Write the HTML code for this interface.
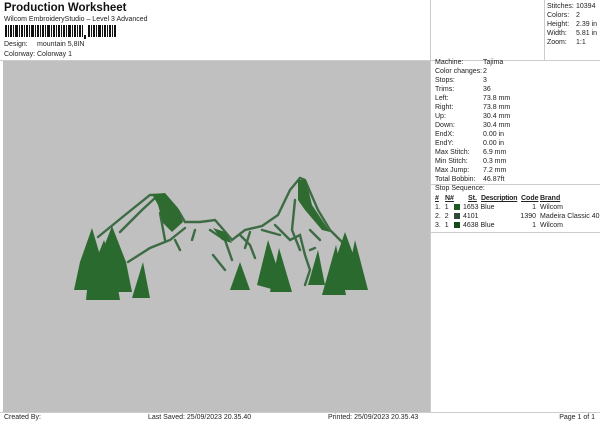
<!DOCTYPE html>
<html><head><style>
body{margin:0;width:600px;height:424px;background:#fff;font-family:"Liberation Sans",sans-serif;font-size:7px;color:#222;position:relative;overflow:hidden}
.a{position:absolute;white-space:nowrap}
.r{position:absolute;white-space:nowrap;line-height:9px}
</style></head><body>
<div class="a" style="left:4px;top:2px;font-size:11.5px;font-weight:bold;color:#111">Production Worksheet</div>
<div class="a" style="left:4px;top:16px">Wilcom EmbroideryStudio – Level 3 Advanced</div>
<svg class="a" style="left:5px;top:25px" width="115" height="14">
<g fill="#111">
<rect x="0" y="0" width="2" height="12"/><rect x="3" y="0" width="1" height="12"/><rect x="5" y="0" width="2" height="12"/><rect x="8" y="0" width="1" height="12"/><rect x="10" y="0" width="3" height="12"/><rect x="14" y="0" width="1" height="12"/><rect x="16" y="0" width="2" height="12"/><rect x="19" y="0" width="1" height="12"/><rect x="21" y="0" width="2" height="12"/><rect x="24" y="0" width="1" height="12"/><rect x="26" y="0" width="3" height="12"/><rect x="30" y="0" width="1" height="12"/><rect x="32" y="0" width="2" height="12"/><rect x="35" y="0" width="1" height="12"/><rect x="37" y="0" width="2" height="12"/><rect x="40" y="0" width="1" height="12"/><rect x="42" y="0" width="3" height="12"/><rect x="46" y="0" width="1" height="12"/><rect x="48" y="0" width="2" height="12"/><rect x="51" y="0" width="1" height="12"/><rect x="53" y="0" width="2" height="12"/><rect x="56" y="0" width="1" height="12"/><rect x="58" y="0" width="2" height="12"/><rect x="61" y="0" width="1" height="12"/><rect x="63" y="0" width="3" height="12"/><rect x="67" y="0" width="1" height="12"/><rect x="69" y="0" width="2" height="12"/><rect x="72" y="0" width="1" height="12"/><rect x="74" y="0" width="2" height="12"/><rect x="77" y="0" width="1" height="12"/>
<rect x="79" y="10" width="2" height="4"/>
<rect x="83" y="0" width="2" height="12"/><rect x="86" y="0" width="1" height="12"/><rect x="88" y="0" width="2" height="12"/><rect x="91" y="0" width="1" height="12"/><rect x="93" y="0" width="3" height="12"/><rect x="97" y="0" width="1" height="12"/><rect x="99" y="0" width="2" height="12"/><rect x="102" y="0" width="1" height="12"/><rect x="104" y="0" width="2" height="12"/><rect x="107" y="0" width="1" height="12"/><rect x="109" y="0" width="2" height="12"/></g></svg>
<div class="a" style="left:4px;top:41px">Design:</div><div class="a" style="left:37px;top:41px">mountain 5,8IN</div>
<div class="a" style="left:4px;top:51px">Colorway:</div><div class="a" style="left:37px;top:51px">Colorway 1</div>
<div class="a" style="left:0;top:60px;width:600px;border-top:1px solid #ccc"></div>
<div class="a" style="left:430px;top:0;height:412px;border-left:1px solid #ccc"></div>
<div class="a" style="left:544px;top:0;height:60px;border-left:1px solid #ccc"></div>
<div class="a" style="left:3px;top:61px;width:427px;height:351px;background:#c0c0c0"></div>
<div class="r" style="left:547px;top:2px">Stitches:<br>Colors:<br>Height:<br>Width:<br>Zoom:</div>
<div class="r" style="left:576px;top:2px">10394<br>2<br>2.39 in<br>5.81 in<br>1:1</div>
<div class="r" style="left:435px;top:58px">Machine:<br>Color changes:<br>Stops:<br>Trims:<br>Left:<br>Right:<br>Up:<br>Down:<br>EndX:<br>EndY:<br>Max Stitch:<br>Min Stitch:<br>Max Jump:<br>Total Bobbin:</div>
<div class="r" style="left:483px;top:58px">Tajima<br>2<br>3<br>36<br>73.8 mm<br>73.8 mm<br>30.4 mm<br>30.4 mm<br>0.00 in<br>0.00 in<br>6.9 mm<br>0.3 mm<br>7.2 mm<br>46.87ft</div>
<div class="a" style="left:431px;top:184px;width:169px;border-top:1px solid #ccc"></div>
<div class="a" style="left:435px;top:185px">Stop Sequence:</div>
<div class="a" style="left:435px;top:195px;font-weight:bold;text-decoration:underline">#</div>
<div class="a" style="left:445px;top:195px;font-weight:bold;text-decoration:underline">N#</div>
<div class="a" style="left:468px;top:195px;font-weight:bold;text-decoration:underline">St.</div>
<div class="a" style="left:481px;top:195px;font-weight:bold;text-decoration:underline;letter-spacing:-0.2px">Description</div>
<div class="a" style="left:521px;top:195px;font-weight:bold;text-decoration:underline">Code</div>
<div class="a" style="left:540px;top:195px;font-weight:bold;text-decoration:underline">Brand</div>
<div class="r" style="left:435px;top:203px">1.&nbsp; 1<br>2.&nbsp; 2<br>3.&nbsp; 1</div>
<div class="a" style="left:454px;top:204px;width:6px;height:6px;background:#1e5a22"></div>
<div class="a" style="left:454px;top:213px;width:6px;height:6px;background:#2f4a3a"></div>
<div class="a" style="left:454px;top:222px;width:6px;height:6px;background:#164a18"></div>
<div class="r" style="left:463px;top:203px">1653 Blue<br>4101<br>4638 Blue</div>
<div class="r" style="left:510px;top:203px;text-align:right;width:26px">1<br>1390<br>1</div>
<div class="r" style="left:540px;top:203px">Wilcom<br>Madeira Classic 40<br>Wilcom</div>
<div class="a" style="left:431px;top:232px;width:169px;border-top:1px solid #ccc"></div>
<svg class="a" style="left:0;top:0" width="430" height="412">
<g fill="none" stroke="#3c6b44" stroke-width="2.4" stroke-linecap="round">
<path d="M98 237 L125 215 L150 195 L160 195 L178 210 L185 222 L200 222 L215 220 L222 228 L232 240 L245 230 L262 226 L278 215 L290 190 L300 178 L305 180 L318 210 L330 230 L345 245"/>
<path d="M120 232 L142 210 L155 198"/>
<path d="M128 262 L150 248 L170 240 L185 228"/>
<path d="M160 213 L165 240"/><path d="M175 240 L180 250"/><path d="M195 230 L192 240"/>
<path d="M210 230 L225 240 L232 260"/><path d="M213 255 L225 270"/>
<path d="M240 235 L250 245 L255 258"/><path d="M250 232 L245 248"/>
<path d="M275 225 L290 240 L300 235 L305 255 L310 270 L305 285"/>
<path d="M262 230 L280 235"/><path d="M295 200 L292 230 L300 250"/><path d="M310 230 L320 240"/><path d="M315 248 L310 250"/>
</g>
<g fill="#2f6b30">
<path d="M152 194 L165 193 L178 208 L183 222 L172 232 L163 223 L158 205 Z"/>
<path d="M298 180 L306 180 L312 205 L330 232 L322 230 L305 210 L298 200 Z"/>
<path d="M213 228 L225 232 L232 243 L222 240 Z"/>
</g>
<g fill="#2b6a2e">
<path d="M92 228 L80 262 L74 290 L110 290 L102 262 Z"/>
<path d="M112 226 L98 262 L96 292 L132 292 L126 262 Z"/>
<path d="M104 240 L88 280 L86 300 L120 300 L115 272 Z"/>
<path d="M143 262 L132 298 L150 298 Z"/>
<path d="M240 262 L230 290 L250 290 Z"/>
<path d="M268 240 L257 285 L275 290 L282 282 Z"/>
<path d="M279 248 L270 292 L292 292 Z"/>
<path d="M318 250 L308 285 L325 285 Z"/>
<path d="M345 232 L325 290 L360 290 L356 262 Z"/>
<path d="M355 240 L345 290 L368 290 Z"/>
<path d="M336 245 L322 295 L346 295 Z"/>
</g>
</svg>
<div class="a" style="left:0;top:412px;width:600px;border-top:1px solid #ccc"></div>
<div class="a" style="left:4px;top:414px">Created By:</div>
<div class="a" style="left:148px;top:414px">Last Saved: 25/09/2023 20.35.40</div>
<div class="a" style="left:328px;top:414px">Printed: 25/09/2023 20.35.43</div>
<div class="a" style="right:5px;top:414px">Page 1 of 1</div>
</body></html>
